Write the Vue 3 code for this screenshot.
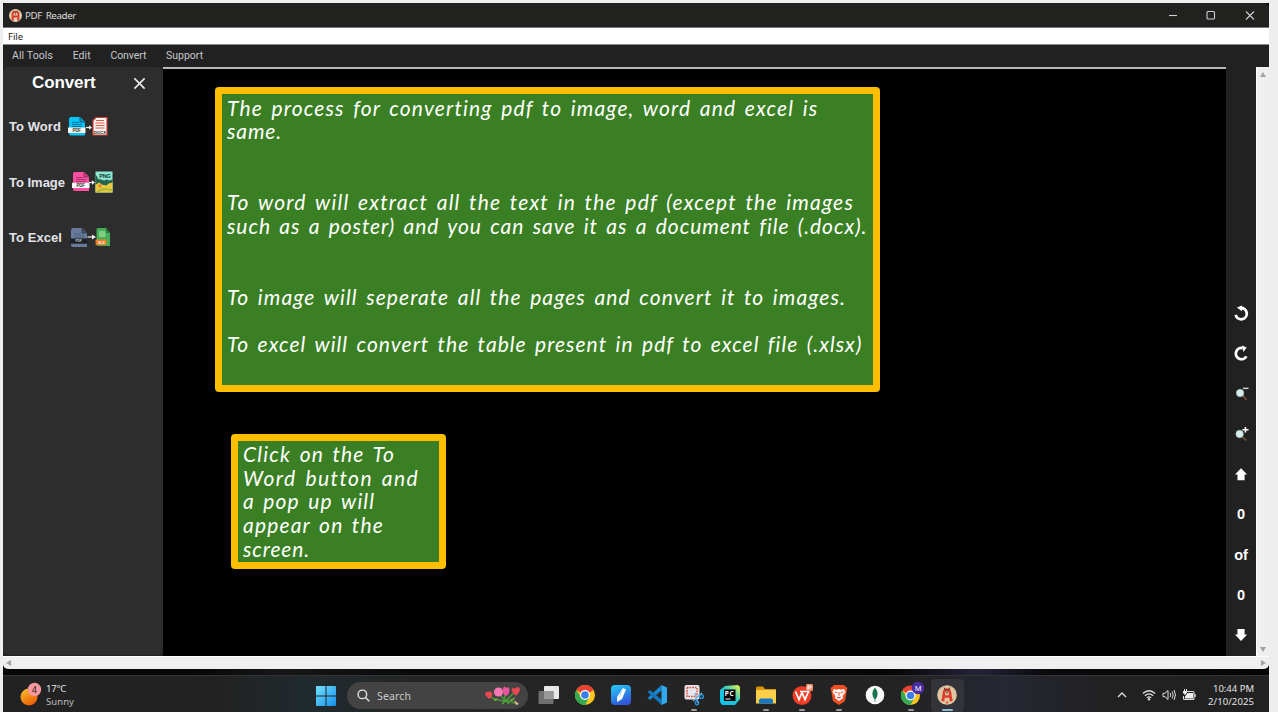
<script setup>
const menus = [
  { label: 'All Tools', width: 41 },
  { label: 'Edit', width: 18 },
  { label: 'Convert', width: 36 },
  { label: 'Support', width: 37 }
]

const mainNote = [
  { text: 'The process for converting pdf to image, word and excel is', width: 591 },
  { text: 'same.', width: 55 },
  { text: '' },
  { text: '' },
  { text: 'To word will extract all the text in the pdf (except the images', width: 627 },
  { text: 'such as a poster) and you can save it as a document file (.docx).', width: 640 },
  { text: '' },
  { text: '' },
  { text: 'To image will seperate all the pages and convert it to images.', width: 619 },
  { text: '' },
  { text: 'To excel will convert the table present in pdf to excel file (.xlsx)', width: 635 }
]

const stepNote = [
  { text: 'Click on the To', width: 152 },
  { text: 'Word button and', width: 175 },
  { text: 'a pop up will', width: 132 },
  { text: 'appear on the', width: 141 },
  { text: 'screen.', width: 67 }
]

// Spreads the letters of a one-line label so that it fills the given width.
const vFit = {
  mounted(el, { value }) {
    if (!value) return
    const natural = el.getBoundingClientRect().width
    el.style.letterSpacing = (value - natural) / el.textContent.length + 'px'
  }
}
</script>

<template>
  <div class="desktop">
    <div class="screen">
      <header class="titlebar">
        <svg class="logo" viewBox="0 0 20 20">
          <circle cx="10" cy="10" r="10" fill="#e3cfae" />
          <path d="M5.500 16V7q0-3 4.500-3t4.500 3v9M5.500 11.500h9M4 16h3.500M12.500 16H16" fill="none" stroke="#d93a28" stroke-width="3" />
          <path d="m6.500 2.500 2 2.500M13.500 2.500l-2 2.500M10 5v4" stroke="#5a3028" stroke-width="1" />
        </svg>
        <span v-fit="51" class="title">PDF Reader</span>
        <svg class="controls" viewBox="0 0 100 20">
          <g fill="none" stroke="#cfcfcf" stroke-width="1.100">
            <path d="M9 10.500h8" />
            <rect x="47" y="6.500" width="7.500" height="7.500" rx="1" />
            <path d="m86 6.500 8 8m0-8-8 8" />
          </g>
        </svg>
      </header>
      <div class="filebar"><span v-fit="15">File</span></div>
      <nav class="nav">
        <div v-for="m in menus" :key="m.label"><span v-fit="m.width">{{ m.label }}</span></div>
      </nav>

      <main class="body">
        <aside class="sidebar">
          <div class="side-head">
            <h1><span v-fit="63.500">Convert</span></h1>
            <svg viewBox="0 0 14 14"><path d="m1.500 1.500 11 11m0-11-11 11" stroke="#f0f0f0" stroke-width="1.600" /></svg>
          </div>
          <div class="action">
            <span v-fit="52">To Word</span>
            <svg class="w-word" viewBox="0 0 40 22">
              <path d="M3 1h9l5 5v13.500H3q-2 0-2-2V3q0-2 2-2z" fill="#06c3f4" />
              <path d="M12 1v5h5" fill="#049dcc" stroke="#183d4a" stroke-width=".7" />
              <path d="M4 6.500h7M4 8.500h10M4 10.500h10" stroke="#05658a" stroke-width=".8" />
              <rect y="11.500" width="17.500" height="5.500" fill="#f7f7f7" />
              <text x="4.500" y="16" font-size="4.500" font-weight="bold" fill="#333" textLength="8.500">PDF</text>
              <path d="M18 11.500h5" stroke="#eee" stroke-width="1.200" /><path d="m21 9.300 3 2.200-3 2.200z" fill="#eee" />
              <path d="M28 1.500h11v17.500H25V4.500z" fill="#faf3f1" stroke="#c9402f" stroke-width="1.200" />
              <path d="M28 4.500h8M27.500 7h9M27.500 9.500h9M27.500 12h9" stroke="#d95a48" stroke-width="1.100" />
              <text x="26" y="17.800" font-size="4.200" font-weight="bold" fill="#222" textLength="12">DOCX</text>
            </svg>
          </div>
          <div class="action">
            <span v-fit="56">To Image</span>
            <svg class="w-image" viewBox="0 0 42 22">
              <path d="M3 1h9l5 5v14H3q-2 0-2-2V3q0-2 2-2z" fill="#fb4fa2" />
              <path d="M12 1v5h5" fill="#d93886" stroke="#6b2848" stroke-width=".7" />
              <path d="M4 6.500h7M4 8.500h10M4 10.500h10" stroke="#9a2961" stroke-width=".8" />
              <rect y="11.800" width="17.500" height="5.200" fill="#f7f7f7" />
              <text x="4.500" y="16.200" font-size="4.500" font-weight="bold" fill="#333" textLength="8.500">PDF</text>
              <path d="M17 11.500h5" stroke="#eee" stroke-width="1.200" /><path d="m20 9.300 3 2.200-3 2.200z" fill="#eee" />
              <rect x="23.500" y=".5" width="17" height="21" fill="#8ee6d1" />
              <path d="M23.500 11h17v10.500h-17z" fill="#e9c842" />
              <path d="M23.500 4q2 1 2.500 4l3 .5 3 1 3-1 2 1 3.500-1v3l-4 1-2 2-5-1-2-2-4 2z" fill="#27644b" />
              <path d="m24 20 7-3 9 1v2l-8-1-6 2z" fill="#a8b93d" />
              <circle cx="28" cy="15" r="1.800" fill="#ef843b" />
              <text x="27.300" y="7.200" font-size="5.600" font-weight="bold" fill="#153b36" textLength="11.500">PNG</text>
            </svg>
          </div>
          <div class="action">
            <span v-fit="53">To Excel</span>
            <svg class="w-excel" viewBox="0 0 42 22">
              <path d="M3 1h9l5 5v14H3q-2 0-2-2V3q0-2 2-2z" fill="#667a9a" />
              <path d="M12 1v5h5" fill="#3e4d68" stroke="#2e3647" stroke-width=".7" />
              <path d="M4 6.500h7M4 8.500h10M4 10.500h10" stroke="#4b5f80" stroke-width=".8" />
              <rect y="11.500" width="17" height="5.200" fill="#1d2026" />
              <text x="5.500" y="15.200" font-size="3.200" font-weight="bold" fill="#ccc">PDF</text>
              <path d="M17.500 10h6" stroke="#eee" stroke-width="1.200" /><path d="m22 7.600 4 2.400-4 2.400z" fill="#eee" />
              <path d="M28 1h8l4 5v13H28q-1.500 0-1.500-1.500V2.500Q26.500 1 28 1z" fill="#45ae57" />
              <path d="M36 1v5h4" fill="#247a3b" />
              <rect x="29" y="4" width="6.500" height="6" fill="#80cf85" />
              <rect x="25.500" y="12.500" width="11" height="5.500" rx="1" fill="#f47b20" />
              <text x="28" y="16.600" font-size="3.500" font-weight="bold" fill="#fff">XLS</text>
            </svg>
          </div>
        </aside>

        <section class="canvas">
          <div class="note note-main">
            <p v-for="(l, i) in mainNote" :key="i"><span v-fit="l.width">{{ l.text }}</span></p>
          </div>
          <div class="note note-step">
            <p v-for="(l, i) in stepNote" :key="i"><span v-fit="l.width">{{ l.text }}</span></p>
          </div>
        </section>

        <aside class="tools">
          <div><svg viewBox="0 0 16 16"><path d="M1.800 9.500a6 6 0 1 0 5-7.300" fill="none" stroke="#fff" stroke-width="3" /><path d="M8.500-.5v6L3 1.500z" fill="#fff" /></svg></div>
          <div><svg viewBox="0 0 16 16"><path d="M13.200 11a6 6 0 1 1-4-8.800" fill="none" stroke="#fff" stroke-width="3" /><path d="M8.500-.5 13.500 1.500l-3.500 5z" fill="#fff" /></svg></div>
          <div><svg viewBox="0 0 16 16"><path d="m8.500 9.500 5 5.500" stroke="#7a5238" stroke-width="1.700" /><circle cx="6.500" cy="7.500" r="4" fill="#d7eeee" stroke="#9eb4b4" stroke-width=".7" /><path d="M9.500 2.500h6" stroke="#ccc" stroke-width="1.600" /></svg></div>
          <div><svg viewBox="0 0 16 16"><path d="m8 10.500 5 5" stroke="#7a5238" stroke-width="1.700" /><circle cx="6" cy="8.500" r="4" fill="#d7eeee" stroke="#9eb4b4" stroke-width=".7" /><path d="M9 4h6.500M12.200 1v6" stroke="#fff" stroke-width="1.700" /></svg></div>
          <div><svg viewBox="0 0 16 16"><path d="m7.500 1.200 6.500 6.800h-2.700v6H3.700V8H1z" fill="#fff" /></svg></div>
          <div><span>0</span></div>
          <div><span>of</span></div>
          <div><span>0</span></div>
          <div><svg viewBox="0 0 16 16"><path d="m7.500 14.800 6.500-6.800h-2.700V2H3.700v6H1z" fill="#fff" /></svg></div>
        </aside>
        <div class="vscroll">
          <svg viewBox="0 0 8 6"><path d="M4 0l3 5H1z" /></svg>
          <svg viewBox="0 0 8 6"><path d="M4 6l3-5H1z" /></svg>
        </div>
      </main>
      <div class="hscroll">
        <svg viewBox="0 0 6 8"><path d="M0 4l5-3v6z" /></svg>
        <svg viewBox="0 0 6 8"><path d="M6 4L1 1v6z" /></svg>
      </div>
      <div class="wallpaper"></div>

      <footer class="taskbar">
        <div class="weather">
          <svg viewBox="0 0 24 24">
            <defs><linearGradient id="sun" x2=".6" y2="1"><stop stop-color="#f7c52e" /><stop offset="1" stop-color="#ee5e08" /></linearGradient></defs>
            <circle cx="10" cy="14" r="8.500" fill="url(#sun)" />
            <circle cx="15.500" cy="6.500" r="6.700" fill="#f9989e" />
            <text x="12.800" y="9.800" font-size="9" fill="#2b2022">4</text>
          </svg>
          <div class="temps">
            <div><span v-fit="20">17°C</span></div>
            <div class="sky"><span v-fit="28">Sunny</span></div>
          </div>
        </div>
        <svg class="start" viewBox="0 0 20 20">
          <defs><linearGradient id="win" x2="1" y2="1"><stop stop-color="#72e2ff" /><stop offset="1" stop-color="#138ee8" /></linearGradient></defs>
          <path d="M0 1q0-1 1-1h8.500v9.500H0zM10.500 0H19q1 0 1 1v8.500h-9.500zM0 10.500h9.500V20H1q-1 0-1-1zM10.500 10.500H20V19q0 1-1 1h-8.500z" fill="url(#win)" />
        </svg>
        <div class="search">
          <svg class="lens" viewBox="0 0 14 14"><circle cx="5.800" cy="5.800" r="4.600" fill="none" stroke="#ddd" stroke-width="1.500" /><path d="m9.200 9.200 4 4" stroke="#ddd" stroke-width="1.700" /></svg>
          <span v-fit="34">Search</span>
          <svg class="flowers" viewBox="0 0 36 20">
            <path d="M4 10q7 5 24 6M13 7l11 11M21 6l-3 12M30 6 17 18M20 14l13 4" fill="none" stroke="#4b9c35" stroke-width="1.500" />
            <path d="M4 13 .2 9q-.2-4 3-3 2-2 4 1 1 3-3.200 6zM31 10l-4.500-5q0-4 4-2.500 3-3 4.500.5 0 3-4 7z" fill="#e94752" />
            <circle cx="13.500" cy="6" r="4.600" fill="#f479b2" />
            <path d="M18 2q2-3 3 0 3-2 3.500 1 0 6-3.500 7-4-2-3-8z" fill="#e9559b" />
            <path d="m8 14 5-2-2 3zM24 14l7-3-4 4z" fill="#70bd42" />
            <path d="m29 14 5 4-3 1z" fill="#e5b794" />
          </svg>
        </div>
        <div class="apps">
          <div><svg viewBox="0 0 20 20"><rect x="5" y="1" width="15" height="13" rx="1" fill="#e9e9e9" /><rect x="-.5" y="6" width="15" height="13" rx="1" fill="#707070" /><path d="M5 6h9.500v8H5z" fill="#999" /></svg></div>
          <div>
            <svg viewBox="0 0 20 20">
              <circle cx="10" cy="10" r="10" fill="#fbc61c" /><path d="M10 10 1.300 5A10 10 0 0 1 18.700 5z" fill="#e64335" /><path d="M1.300 5A10 10 0 0 0 10 20l4.300-7.500L6 12.300z" fill="#35a852" />
              <circle cx="10" cy="10" r="5" fill="#fff" /><circle cx="10" cy="10" r="3.800" fill="#397ee8" />
            </svg>
          </div>
          <div>
            <svg viewBox="0 0 20 20">
              <defs><linearGradient id="pen" x2=".4" y2="1"><stop stop-color="#22d1fa" /><stop offset="1" stop-color="#3158db" /></linearGradient></defs>
              <rect width="20" height="20" rx="4" fill="url(#pen)" /><path d="m12 3 3 1.500-4 9.500L6 17l.3-5.500z" fill="#fff" /><path d="m10.500 6-2 6" stroke="#8acdf3" stroke-width=".8" />
            </svg>
          </div>
          <div><svg viewBox="0 0 20 20"><path d="M14.500 0v5.500L3 15l-2.500-2z" fill="#1686cf" /><path d="M.5 7 3 5l11.500 9.500V20z" fill="#1474bc" /><path d="m14.500 0 5.500 2.500v15L14.500 20z" fill="#32a9ed" /></svg></div>
          <div class="running">
            <svg viewBox="0 0 20 20"><rect x=".5" width="15" height="14.500" rx="2" fill="#e4e7eb" /><rect x="3" y="2.500" width="10" height="9" fill="none" stroke="#e24b39" stroke-width="1.500" stroke-dasharray="1.600 1" /><path d="m9 16 9-8M11 8l3 10" stroke="#7fb6d6" stroke-width="1.500" /><circle cx="17.500" cy="11.500" r="1.900" fill="none" stroke="#2794d7" stroke-width="1.400" /><circle cx="13" cy="18" r="1.700" fill="none" stroke="#2794d7" stroke-width="1.400" /></svg>
          </div>
          <div>
            <svg viewBox="0 0 20 20">
              <defs><linearGradient id="pyc" x1="0" y1="1" x2="1" y2="0"><stop stop-color="#08bdf2" /><stop offset=".5" stop-color="#1ec8d4" /><stop offset="1" stop-color="#f4f345" /></linearGradient></defs>
              <path d="m5 1 13-1 2 2v12l-5 6H2l-2-3V5z" fill="url(#pyc)" /><rect x="4" y="4.500" width="11.500" height="11.500" fill="#050505" />
              <text x="4.800" y="10.500" font-size="6.500" font-weight="bold" fill="#fff" textLength="9">PC</text><path d="M5.500 14h5" stroke="#fff" />
            </svg>
          </div>
          <div class="running"><svg viewBox="0 0 20 20"><path d="M0 3q0-1.500 1.500-1.500H7l2 2.500h11v6H0z" fill="#d9930b" /><path d="M0 5h20v13.500H0z" fill="#fbce49" /><path d="M3 18.500v-3q0-2 2-2h10q2 0 2 2v3z" fill="#1977c9" /></svg></div>
          <div class="running"><svg viewBox="0 0 20 20"><circle cx="10" cy="10.500" r="9.500" fill="#ee3d24" /><path d="m3.500 6.500 3.500 8 3-7 3 7 3.500-8H8" fill="none" stroke="#fff" stroke-width="1.700" /><rect x="14" y="-1" width="7" height="7" rx="1" fill="#ee8969" /><path d="M16 5V1h3v2h-3" fill="none" stroke="#fff" /></svg></div>
          <div class="running"><svg viewBox="0 0 20 20"><path d="M5 0h10l2 2 1.500 1-.8 3L16 16l-6 4-6-4L2.300 6l-.8-3L3 2z" fill="#f25022" /><path d="m5 4 3 .8 2-.8 2 .8L15 4l1.500 3-3 4 .5 2-4 3-4-3 .5-2-3-4z" fill="#fff" /><path d="m5.500 7 3 1M14.500 7l-3 1M10 7v4M8 12l2 1 2-1" stroke="#f25022" /></svg></div>
          <div><svg viewBox="0 0 20 20"><circle cx="10" cy="10" r="9.300" fill="#f8f8f8" /><path d="M10 2.500q5 6 .3 12V17h-.6v-2.500q-4.700-6 .3-12z" fill="#16744b" /></svg></div>
          <div class="running">
            <svg viewBox="0 0 20 20">
              <circle cx="9.500" cy="10.500" r="9.500" fill="#fbc61c" /><path d="M9.500 10.500 1.300 5.500A9.500 9.500 0 0 1 18 5.500z" fill="#e64335" /><path d="M1.300 5.500A9.500 9.500 0 0 0 9.500 20l4-7L6 12z" fill="#35a852" />
              <circle cx="9.500" cy="10.500" r="5" fill="#fff" /><circle cx="9.500" cy="10.500" r="3.800" fill="#397ee8" />
              <circle cx="17" cy="3" r="6.200" fill="#4a2aa5" /><text x="13.700" y="5.700" font-size="7.500" fill="#fff">M</text>
            </svg>
          </div>
          <div class="running active">
            <svg viewBox="0 0 20 20"><circle cx="10" cy="10" r="9.800" fill="#dfc7a2" /><path d="M6 15.500 7 7.500q.5-3 3-3t3 3l1 8M6.500 11.500h7M4.500 15h3M12.500 15h3" fill="none" stroke="#df3c2c" stroke-width="2.600" /><path d="m7 2.500 1.500 3M13 2.500l-1.500 3M10 4.500v4" stroke="#4a302b" stroke-width=".9" /><circle cx="10" cy="17.500" r="1.200" fill="#e55c42" /></svg>
          </div>
        </div>
        <div class="tray">
          <svg class="chev" viewBox="0 0 10 10"><path d="m1 7 4-4 4 4" fill="none" stroke="#ddd" stroke-width="1.400" /></svg>
          <svg class="wifi" viewBox="0 0 14 12"><g fill="none" stroke="#ddd" stroke-width="1.200"><path d="M.8 4.500q6.200-5.500 12.400 0M2.800 6.700q4.200-3.600 8.400 0M4.800 8.800q2.200-2 4.400 0" /></g><circle cx="7" cy="10.200" r="1.200" fill="#ddd" /></svg>
          <svg class="vol" viewBox="0 0 14 12"><path d="M1 4.300h2l3-2.800v9L3 7.700H1zM8 4q1.500 2 0 4M10 2.500q2.500 3.500 0 7M12 1q3 5 0 10" fill="none" stroke="#ddd" stroke-width="1" /></svg>
          <svg class="bat" viewBox="0 0 14 12"><path d="M4.500 2.500H11q1 0 1 1v6q0 1-1 1H2.500q-1 0-1-1V7" fill="none" stroke="#ddd" stroke-width="1.100" /><path d="M5.500 4H11v5.500H3V7.500zM12.500 5h1.200v3h-1.200zM1 2h1V0h1v2h1V0h1v3.500L3 6 1 4z" fill="#eee" /></svg>
          <div class="clock">
            <div><span v-fit="41">10:44 PM</span></div>
            <div><span v-fit="46">2/10/2025</span></div>
          </div>
        </div>
      </footer>
    </div>
  </div>
</template>

<style>
body { background: #eee; overflow: hidden; }
</style>

<style scoped>
* { box-sizing: border-box; }
svg { display: block; flex: none; overflow: visible; }
p, h1 { margin: 0; }
span { white-space: pre; }
.desktop { width: 1278px; height: 712px; padding: 3px 9px 0 3px; background: #eee; font-family: "Noto Sans", "Open Sans", sans-serif; }
.screen { display: flex; flex-direction: column; height: 709px; background: #050505; }
.titlebar { display: flex; align-items: center; height: 25px; padding-left: 6px; background: #212120; border-bottom: 1px solid #777; border-radius: 4px 5px 0 0; color: #ddd; font-size: 9.8px; }
.title { margin-top: 1px; word-spacing: 1.5px; }
.logo { width: 13px; height: 13px; margin-right: 3px; }
.controls { width: 100px; height: 20px; margin-left: auto; margin-right: 9px; }
.filebar { height: 17px; padding-left: 5px; background: #fff; border-bottom: 1px solid #888; color: #222; font-size: 9.5px; line-height: 17px; }
.nav { display: flex; gap: 19.7px; height: 22px; padding-left: 9px; background: #212121; color: #c7c7cb; font-family: Roboto, sans-serif; font-size: 10.5px; line-height: 21px; }
.body { display: flex; height: 589px; background: #212121; }
.sidebar { width: 160px; height: 588px; background: #2d2d2d; border-radius: 5px; color: #e2e2e8; font-family: "Liberation Sans", Arial, sans-serif; font-weight: bold; }
.side-head { display: flex; align-items: center; height: 32px; padding-left: 29px; }
.side-head h1 { width: 101px; color: #fff; font-size: 17px; line-height: 32px; }
.side-head svg { width: 13px; height: 13px; }
.action { display: flex; align-items: center; height: 55.5px; padding-left: 6px; font-size: 13px; }
.w-word { width: 40px; height: 22px; margin-left: 7px; }
.w-image { width: 42px; height: 22px; margin-left: 7px; }
.w-excel { width: 42px; height: 22px; margin-left: 8px; }
.canvas { display: flex; flex-direction: column; align-items: flex-start; gap: 42px; width: 1063px; padding: 18px 0 0 52px; background: #000; border-top: 2px solid #b9b9b9; }
.note { border: 7px solid #ffbf00; border-radius: 4px; background: #3b7f24; color: #fff; font-family: Lato, "Open Sans", sans-serif; font-size: 21px; font-style: italic; line-height: 23.7px; word-spacing: 2.5px; }
.note p { height: 23.7px; }
.note-main { width: 665px; height: 305px; padding: 1.5px 0 0 5px; }
.note-step { width: 215px; height: 135px; margin-left: 16px; padding: 1px 0 0 5px; }
.tools { display: flex; flex-direction: column; justify-content: flex-end; width: 30px; padding-bottom: 1px; color: #fff; font-family: "Liberation Sans", Arial, sans-serif; font-size: 14.5px; font-weight: bold; }
.tools div { display: flex; align-items: center; justify-content: center; height: 40.2px; }
.tools svg { width: 15px; height: 15px; }
.vscroll { display: flex; flex-direction: column; align-items: center; justify-content: space-between; width: 13px; padding: 5px 0 4px; background: #efefef; border-left: 1px solid #fff; }
.vscroll svg { width: 8px; height: 6px; fill: #a2a2a2; }
.hscroll { display: flex; align-items: center; justify-content: space-between; height: 13px; padding: 0 3px; background: #efefef; border-top: 1px solid #fff; border-radius: 0 0 5px 5px; }
.hscroll svg { width: 6px; height: 8px; fill: #a2a2a2; }
.wallpaper { height: 6px; background: linear-gradient(90deg, #070707 0 15%, #161719 22%, #0a0a0a 32%, #050505 70%, #25233a 77%, #0b0b0f 82%, #050505); }
.taskbar { display: flex; align-items: center; height: 37px; background: linear-gradient(90deg, #222 0 17%, #202a2e 24%, #252525 34%, #232323 70%, #252732 79%, #212121 88%); border-top: 1px solid #343434; color: #e4e4e4; font-size: 9.5px; }
.weather { display: flex; align-items: center; width: 313px; padding: 2px 0 0 16px; }
.weather svg { width: 24px; height: 24px; }
.temps { margin-left: 3px; line-height: 13px; }
.sky { color: #bdbdbd; }
.start { width: 20px; height: 20px; margin-top: 4px; }
.search { display: flex; align-items: center; width: 181px; height: 27px; margin: 3px 2.4px 0 11px; padding: 0 7px 0 10px; background: #434343; border-radius: 14px; color: #c8c8c8; font-size: 10.5px; }
.lens { width: 13px; height: 13px; margin-right: 7px; }
.flowers { width: 36px; height: 20px; margin-left: auto; }
.apps { display: flex; height: 36px; padding-top: 3px; }
.apps div { display: flex; flex-direction: column; align-items: center; width: 36.27px; padding-top: 6px; }
.apps svg { width: 20px; height: 20px; }
.running::after { content: ""; width: 6px; height: 2px; margin-top: 4px; border-radius: 1px; background: #999; }
.apps .active { width: 33px; height: 33px; margin: 0 1.6px; background: #323439; border-radius: 4px; }
.active::after { width: 11px; background: #8bb9d4; }
.tray { display: flex; align-items: center; margin-left: auto; padding: 2px 15px 0 0; }
.chev { width: 10px; height: 10px; margin-right: 15px; }
.wifi { width: 14px; height: 12px; margin-right: 6px; }
.vol { width: 14px; height: 12px; margin-right: 6px; }
.bat { width: 14px; height: 12px; }
.clock { width: 58px; line-height: 13px; text-align: right; }
</style>
